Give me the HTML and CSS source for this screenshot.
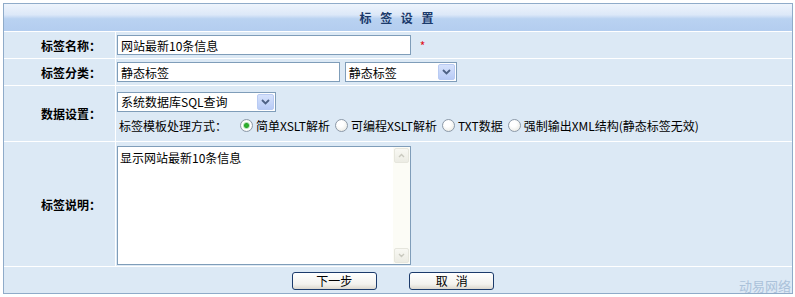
FILE: index.html
```html
<!DOCTYPE html>
<html lang="zh-CN">
<head>
    <meta charset="UTF-8">
    <title>标签设置</title>
    <link rel="stylesheet" href="styles.css">
</head>
<body>
    <div class="panel">
        <table class="form-table">
            <tr>
                <th colspan="2" class="title">标 签 设 置</th>
            </tr>
            <tr class="row-short">
                <td class="label">标签名称：</td>
                <td class="field">
                    <input type="text" class="text-long" value="网站最新10条信息">
                    <span class="required">*</span>
                </td>
            </tr>
            <tr class="row-short">
                <td class="label">标签分类：</td>
                <td class="field">
                    <input type="text" class="text-mid" value="静态标签">
                    <span class="select-box select-small">
                        <span class="select-text">静态标签</span>
                        <span class="select-arrow">
                            <svg width="9" height="6" viewBox="0 0 9 6"><path d="M1 1 L4.5 4.5 L8 1" fill="none" stroke="#4d6185" stroke-width="1.8"/></svg>
                        </span>
                    </span>
                </td>
            </tr>
            <tr class="row-data">
                <td class="label">数据设置：</td>
                <td class="field">
                    <div class="data-line">
                        <span class="select-box select-wide">
                            <span class="select-text">系统数据库SQL查询</span>
                            <span class="select-arrow">
                                <svg width="9" height="6" viewBox="0 0 9 6"><path d="M1 1 L4.5 4.5 L8 1" fill="none" stroke="#4d6185" stroke-width="1.8"/></svg>
                            </span>
                        </span>
                    </div>
                    <div class="data-line mode-line">
                        <span class="mode-title">标签模板处理方式：</span>
                        <label class="radio"><input type="radio" name="mode" checked>简单XSLT解析</label>
                        <label class="radio"><input type="radio" name="mode">可编程XSLT解析</label>
                        <label class="radio"><input type="radio" name="mode">TXT数据</label>
                        <label class="radio"><input type="radio" name="mode">强制输出XML结构(静态标签无效)</label>
                    </div>
                </td>
            </tr>
            <tr class="row-intro">
                <td class="label">标签说明：</td>
                <td class="field">
                    <div class="memo">
                        <textarea class="memo-text">显示网站最新10条信息</textarea>
                        <div class="memo-bar">
                            <span class="bar-btn">
                                <svg width="7" height="5" viewBox="0 0 7 5"><path d="M1 4 L3.5 1.5 L6 4" fill="none" stroke="#c9c9bf" stroke-width="1.4"/></svg>
                            </span>
                            <span class="bar-btn">
                                <svg width="7" height="5" viewBox="0 0 7 5"><path d="M1 1 L3.5 3.5 L6 1" fill="none" stroke="#c9c9bf" stroke-width="1.4"/></svg>
                            </span>
                        </div>
                    </div>
                </td>
            </tr>
            <tr class="row-buttons">
                <td colspan="2" class="buttons">
                    <button type="button">下一步</button>
                    <button type="button">取&nbsp;&nbsp;&nbsp;消</button>
                </td>
            </tr>
        </table>
        <div class="watermark">动易网络</div>
    </div>
</body>
</html>
```

FILE: styles.css
```css
body {
    margin: 0;
    padding: 3px 0 0 3px;
    font-family: "Noto Sans CJK SC", "Liberation Sans", sans-serif;
    font-size: 12px;
    color: #000;
    background-color: #fff;
    overflow: hidden;
}

.panel {
    position: relative;
    width: 790px;
    height: 294px;
}

.form-table {
    width: 790px;
    border: 1px solid #8fabc9;
    border-spacing: 0;
    background-color: #dce9f5;
}

.form-table td,
.form-table th {
    padding: 0;
}

.title {
    height: 27px;
    background: linear-gradient(#eef4fc 0%, #dce8f8 40%, #b9d2f1 55%, #b3cdef 100%);
    color: #1b3a6b;
    font-size: 12px;
    font-weight: bold;
    letter-spacing: 3px;
    text-align: center;
}

.label {
    width: 97px;
    padding-right: 14px !important;
    border-top: 1px solid #fff;
    border-right: 1px solid #fff;
    text-align: right;
    font-weight: bold;
    white-space: nowrap;
}

.field {
    border-top: 1px solid #fff;
    padding-left: 1px !important;
}

.row-short td {
    height: 26px;
}

.row-data td {
    height: 55px;
}

.row-intro td {
    height: 124px;
}

.row-buttons td {
    height: 26px;
    border-top: 1px solid #fff;
}

input[type="text"] {
    box-sizing: border-box;
    height: 20px;
    padding: 1px 3px 0;
    border: 1px solid #7f9db9;
    background-color: #fff;
    font-family: inherit;
    font-size: 12px;
    vertical-align: middle;
    outline: none;
}

.text-long {
    width: 294px;
}

.text-mid {
    width: 223px;
}

.required {
    margin-left: 6px;
    color: #e0101a;
    vertical-align: middle;
}

/* select no estilo do XP */
.select-box {
    box-sizing: border-box;
    display: inline-flex;
    align-items: center;
    height: 20px;
    border: 1px solid #7f9db9;
    background-color: #fff;
    vertical-align: middle;
}

.select-small {
    width: 112px;
    margin-left: 2px;
}

.select-wide {
    width: 159px;
}

.select-text {
    flex: 1;
    padding-left: 3px;
    white-space: nowrap;
}

.select-arrow {
    box-sizing: border-box;
    display: flex;
    align-items: center;
    justify-content: center;
    width: 17px;
    height: 16px;
    margin-right: 1px;
    border: 1px solid #b9cbf3;
    border-radius: 2px;
    background: linear-gradient(#d6e2fc, #b8cbf6);
}

.data-line {
    display: flex;
    align-items: center;
}

.mode-line {
    margin-top: 4px;
    padding-left: 2px;
    height: 20px;
}

.mode-title {
    margin-right: 13px;
}

.radio {
    display: inline-flex;
    align-items: center;
    margin-right: 5px;
    white-space: nowrap;
}

.radio input {
    appearance: none;
    box-sizing: border-box;
    width: 13px;
    height: 13px;
    margin: 0 3px 0 0;
    border: 1px solid #8c99a8;
    border-radius: 50%;
    background: radial-gradient(circle at 40% 35%, #fff 30%, #e4e4dc 100%);
}

.radio input:checked {
    background: radial-gradient(circle, #2fb52f 0, #2aa62a 2px, #b9e3b9 3px, #fff 4px, #e4e4dc 100%);
}

/* textarea com barra de rolagem desenhada */
.memo {
    box-sizing: border-box;
    display: flex;
    width: 294px;
    height: 119px;
    margin-top: 3px;
    border: 1px solid #7f9db9;
    background-color: #fff;
}

.memo-text {
    flex: 1;
    margin: 0;
    padding: 2px 2px;
    border: none;
    resize: none;
    overflow: hidden;
    font-family: inherit;
    font-size: 12px;
    outline: none;
}

.memo-bar {
    display: flex;
    flex-direction: column;
    justify-content: space-between;
    width: 17px;
    background-color: #fcfcf6;
}

.bar-btn {
    box-sizing: border-box;
    display: flex;
    align-items: center;
    justify-content: center;
    width: 15px;
    height: 15px;
    margin: 1px;
    border: 1px solid #e6e6dd;
    border-radius: 2px;
    background: linear-gradient(#f8f8f3, #ecece4);
}

.buttons {
    padding-right: 10px !important;
    text-align: center;
}

button {
    box-sizing: border-box;
    width: 85px;
    height: 18px;
    margin: 0 15px;
    padding: 0;
    border: 1px solid #1c3b6b;
    border-radius: 3px;
    background: linear-gradient(#ffffff, #f3f2ee 70%, #dcd8ce);
    font-family: inherit;
    font-size: 12px;
    line-height: 15px;
    color: #000;
    vertical-align: middle;
    cursor: pointer;
}

.watermark {
    position: absolute;
    right: 2px;
    top: 275px;
    font-size: 13px;
    line-height: 16px;
    color: #abc2da;
}
```
